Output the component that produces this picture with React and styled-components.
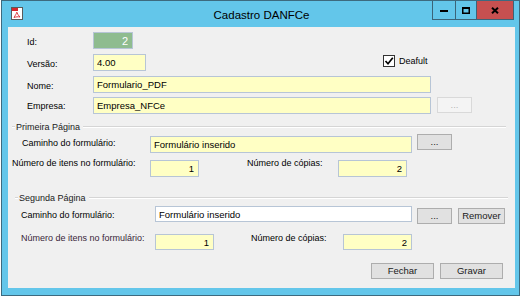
import styled, { createGlobalStyle } from "styled-components";

const Global = createGlobalStyle`
  body { margin: 0; background: #ffffff; }
  * { box-sizing: border-box; }
`;

const Window = styled.div`
  width: 519px;
  height: 296px;
  margin-left: 1px;
  border: 1px solid #3d6a7f;
  background: #63c6ea;
  padding: 0 4px 7px 6px;
  display: flex;
  flex-direction: column;
`;

const TitleBar = styled.div`
  height: 26px;
  flex: none;
  display: grid;
  grid-template-columns: 1fr auto 1fr;
  align-items: start;
`;

const AppIcon = styled.svg`
  margin: 6px 0 0 3px;
  display: block;
`;

const Caption = styled.div`
  margin-top: 7px;
  font-family: "Liberation Sans", Arial, sans-serif;
  font-size: 11.5px;
  line-height: 14px;
  color: #000;
  white-space: nowrap;
`;

const Controls = styled.div`
  justify-self: end;
  margin-right: 1px;
  display: flex;
  border: 1px solid #3b6478;
  border-top: none;
`;

const CtrlButton = styled.div`
  width: ${(p) => p.$w}px;
  height: 18px;
  display: flex;
  align-items: center;
  justify-content: center;
  background: ${(p) => (p.$close ? "#c75050" : "transparent")};
  & + & {
    border-left: 1px solid #3b6478;
  }
`;

const Client = styled.div`
  flex: 1;
  background: #f0f0f0;
  display: flex;
  flex-direction: column;
  padding-top: 5px;
  font-family: "Liberation Sans", Arial, sans-serif;
  font-size: 9px;
  color: #000;
`;

const Row = styled.div`
  display: flex;
  align-items: flex-start;
  height: ${(p) => p.$h ?? 17}px;
  margin-top: ${(p) => p.$mt ?? 0}px;
  padding-left: ${(p) => p.$pl ?? 0}px;
  flex: none;
`;

const Label = styled.span`
  width: ${(p) => p.$w}px;
  margin-left: ${(p) => p.$ml ?? 0}px;
  margin-top: ${(p) => p.$mt ?? 3}px;
  line-height: 12px;
  white-space: nowrap;
  flex: none;
  color: ${(p) => p.$color ?? "#000"};
`;

const fieldColors = {
  yellow: "#ffffc4",
  green: "#8fbc8f",
  white: "#ffffff",
};

const Field = styled.input`
  width: ${(p) => p.$w}px;
  height: ${(p) => p.$h ?? 17}px;
  flex: none;
  margin: 0;
  border: 1px solid #b7c5d6;
  background: ${(p) => fieldColors[p.$tone ?? "yellow"]};
  color: ${(p) => (p.$tone === "green" ? "#ffffff" : "#000")};
  text-align: ${(p) => p.$align ?? "left"};
  padding: 0 ${(p) => (p.$align === "right" ? 4 : 2)}px 0 ${(p) => (p.$align === "right" ? 2 : 3)}px;
  font-family: "Liberation Sans", Arial, sans-serif;
  font-size: ${(p) => (p.$tone === "green" ? 11 : 9.5)}px;
  outline: none;
`;

const Button = styled.button`
  width: ${(p) => p.$w}px;
  height: ${(p) => p.$h ?? 16}px;
  margin: ${(p) => p.$mt ?? 0}px 0 0 ${(p) => p.$ml ?? 0}px;
  flex: none;
  padding: 0;
  border: 1px solid ${(p) => (p.disabled ? "#d9d9d9" : "#adadad")};
  background: ${(p) => (p.disabled ? "#f4f4f4" : "#e1e1e1")};
  color: ${(p) => (p.disabled ? "#b5b5b5" : "#1a1a1a")};
  font-family: "Liberation Sans", Arial, sans-serif;
  font-size: 9.5px;
  line-height: 12px;
`;

const CheckLabel = styled.label`
  display: flex;
  align-items: center;
  gap: 4px;
  margin: 1px 0 0 ${(p) => p.$ml}px;
  line-height: 12px;
  white-space: nowrap;
`;

const CheckBox = styled.span`
  width: 12px;
  height: 12px;
  border: 1px solid #333;
  background: #fff;
  display: flex;
  align-items: center;
  justify-content: center;
`;

const GroupHead = styled.div`
  display: flex;
  align-items: center;
  height: 12px;
  flex: none;
  margin-top: ${(p) => p.$mt}px;
  margin-left: ${(p) => p.$ml}px;
  margin-right: ${(p) => p.$mr}px;
`;

const Rule = styled.span`
  height: 2px;
  border-top: 1px solid #d5d5d5;
  border-bottom: 1px solid #ffffff;
  width: ${(p) => (p.$w ? `${p.$w}px` : "auto")};
  flex: ${(p) => (p.$w ? "none" : 1)};
`;

const Legend = styled.span`
  margin: 0 3px 0 1px;
  line-height: 12px;
  color: #1a1a1a;
  white-space: nowrap;
`;

const Footer = styled.div`
  display: flex;
  justify-content: flex-end;
  gap: 6px;
  margin-top: 13px;
  padding-right: 12px;
`;

const PdfIcon = () => (
  <AppIcon width="12" height="13" viewBox="0 0 12 13">
    <rect x="0.5" y="0.5" width="11" height="12" fill="#fff" stroke="#5a5a5a" />
    <rect x="1" y="1" width="6" height="3" fill="#d9262c" />
    <path d="M3 10.5 C4.5 8 5.5 6.5 5.8 5.2 C6.5 7 7.5 8.8 9 10 C7 9.6 5 9.8 3 10.5 Z" fill="none" stroke="#d9262c" strokeWidth="0.9" />
  </AppIcon>
);

const App = () => {
  return (
    <>
      <Global />
      <Window>
        <TitleBar>
          <PdfIcon />
          <Caption>Cadastro DANFCe</Caption>
          <Controls>
            <CtrlButton $w={22}>
              <svg width="8" height="8" viewBox="0 0 8 8">
                <rect x="0" y="4" width="8" height="2" fill="#000" />
              </svg>
            </CtrlButton>
            <CtrlButton $w={21}>
              <svg width="8" height="7" viewBox="0 0 8 7">
                <rect x="0.75" y="1" width="6.5" height="5.25" fill="none" stroke="#000" strokeWidth="1.5" />
                <rect x="0" y="0" width="8" height="2" fill="#000" />
              </svg>
            </CtrlButton>
            <CtrlButton $w={37} $close>
              <svg width="8" height="7" viewBox="0 0 8 7">
                <path d="M1 0.8 L7 6.2 M7 0.8 L1 6.2" stroke="#000" strokeWidth="2" />
              </svg>
            </CtrlButton>
          </Controls>
        </TitleBar>

        <Client>
          <Row $pl={19}>
            <Label $w={66} $mt={4}>Id:</Label>
            <Field $w={40} $tone="green" $align="right" readOnly value="2" />
          </Row>
          <Row $pl={19} $mt={5}>
            <Label $w={66} $mt={4}>Versão:</Label>
            <Field $w={53} readOnly value="4.00" />
            <CheckLabel $ml={237}>
              <CheckBox>
                <svg width="10" height="10" viewBox="0 0 10 10">
                  <path d="M1.5 5 L4 7.8 L8.8 1.8" fill="none" stroke="#000" strokeWidth="1.7" />
                </svg>
              </CheckBox>
              Deafult
            </CheckLabel>
          </Row>
          <Row $pl={19} $mt={5}>
            <Label $w={66} $mt={4}>Nome:</Label>
            <Field $w={338} readOnly value="Formulario_PDF" />
          </Row>
          <Row $pl={19} $mt={4}>
            <Label $w={66} $mt={3}>Empresa:</Label>
            <Field $w={338} readOnly value="Empresa_NFCe" />
            <Button $w={35} $ml={6} $h={16} disabled>...</Button>
          </Row>

          <GroupHead $mt={7} $ml={4} $mr={9}>
            <Rule $w={3} />
            <Legend>Primeira Página</Legend>
            <Rule />
          </GroupHead>
          <Row $pl={14} $mt={3}>
            <Label $w={128} $mt={1}>Caminho do formulário:</Label>
            <Field $w={262} readOnly value="Formulário inserido" />
            <Button $w={35} $ml={5} $mt={-2}>...</Button>
          </Row>
          <Row $pl={4} $mt={7}>
            <Label $w={138} $mt={-3}>Número de itens no formulário:</Label>
            <Field $w={49} $align="right" readOnly value="1" />
            <Label $w={91} $ml={48} $mt={-3}>Número de cópias:</Label>
            <Field $w={69} $align="right" readOnly value="2" />
          </Row>

          <GroupHead $mt={15} $ml={7} $mr={7}>
            <Rule $w={3} />
            <Legend>Segunda Página</Legend>
            <Rule />
          </GroupHead>
          <Row $pl={13} $mt={2}>
            <Label $w={134} $mt={3}>Caminho do formulário:</Label>
            <Field $w={257} $h={16} $tone="white" readOnly value="Formulário inserido" />
            <Button $w={35} $ml={5} $mt={2}>...</Button>
            <Button $w={47} $ml={6} $mt={2}>Remover</Button>
          </Row>
          <Row $pl={13} $mt={11} $h={16}>
            <Label $w={134} $mt={-2} $color="#3a1f3a">Número de itens no formulário:</Label>
            <Field $w={59} $h={16} $align="right" readOnly value="1" />
            <Label $w={92} $ml={37} $mt={-2}>Número de cópias:</Label>
            <Field $w={69} $h={16} $align="right" readOnly value="2" />
          </Row>

          <Footer>
            <Button $w={63}>Fechar</Button>
            <Button $w={63}>Gravar</Button>
          </Footer>
        </Client>
      </Window>
    </>
  );
};

export default App;
